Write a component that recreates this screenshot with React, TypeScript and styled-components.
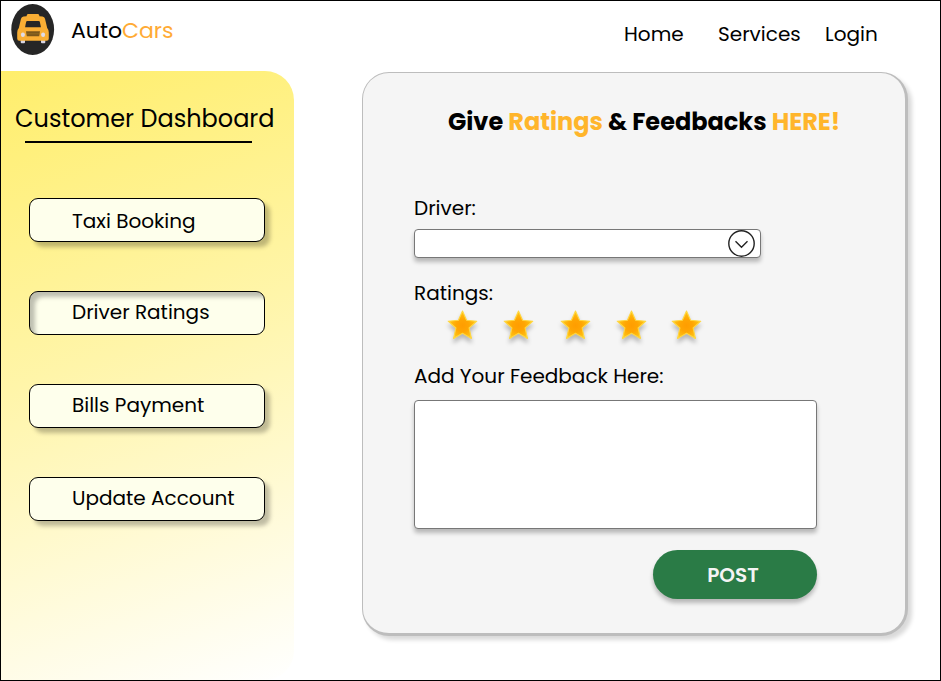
import React from 'react';
import styled, { createGlobalStyle } from 'styled-components';

const GlobalStyle = createGlobalStyle`
  * { box-sizing: border-box; }
  body {
    margin: 0;
    background: #fff;
    color: #000;
    font-family: Poppins, Inter, sans-serif;
    overflow: hidden;
  }
  h1, h2 { margin: 0; }
  button { font-family: inherit; color: inherit; }
`;

const Page = styled.div`
  width: 941px;
  height: 681px;
  border: 1px solid #000;
  display: flex;
  flex-direction: column;
  overflow: hidden;
`;

const Header = styled.header`
  height: 70px;
  flex: none;
  display: flex;
  align-items: flex-start;
  justify-content: space-between;
  padding: 0 63px 0 10px;
`;

const Brand = styled.div`
  display: flex;
  padding-top: 3px;
  gap: 16px;
`;

const BrandName = styled.span`
  font-size: 22px;
  line-height: 26px;
  margin-top: 14px;
`;

const Accent = styled.span<{ $tone?: string }>`
  color: ${(p) => p.$tone ?? '#ffb52b'};
`;

const Nav = styled.nav`
  display: grid;
  grid-template-columns: 94px 107px 52px;
  padding-top: 21px;
`;

const NavLink = styled.a`
  font-size: 20px;
  line-height: 24px;
  white-space: nowrap;
`;

const Body = styled.div`
  display: flex;
  align-items: flex-start;
  gap: 68px;
`;

const Sidebar = styled.aside`
  width: 293px;
  height: 609px;
  border-radius: 0 29px 29px 0;
  background: linear-gradient(160deg, #ffee6b 0%, #fff5a9 45%, #ffffff 100%);
  padding: 35px 0 0 28px;
`;

const SidebarTitle = styled.h1`
  width: 262px;
  margin-left: -14px;
  font-size: 24px;
  font-weight: 400;
  line-height: 26px;
  white-space: nowrap;
`;

const Underline = styled.div`
  width: 227px;
  height: 2px;
  margin: 9px 0 0 -4px;
  background: #000;
`;

const Menu = styled.div`
  display: flex;
  flex-direction: column;
  gap: 49px;
  margin-top: 55px;
`;

const MenuButton = styled.button<{ $active?: boolean; $lowered?: boolean }>`
  width: 236px;
  height: 44px;
  padding: ${(p) => (p.$lowered ? '2px 0 0 42px' : '0 0 2px 42px')};
  border: 1px solid #000;
  border-radius: 9px;
  background: #feffec;
  box-shadow: ${(p) => (p.$active ? 'inset 5px 5px 4px rgba(0, 0, 0, 0.25)' : '5px 5px 4px rgba(0, 0, 0, 0.25)')};
  font-size: 20px;
  line-height: 24px;
  text-align: left;
  white-space: nowrap;
`;

const Panel = styled.main`
  width: 546px;
  height: 564px;
  margin-top: 1px;
  padding: 36px 88px 0 51px;
  border: 1px solid #bdbdbd;
  border-right-width: 3px;
  border-bottom-width: 3px;
  border-radius: 27px;
  background: #f5f5f5;
  box-shadow: 4px 4px 4px rgba(0, 0, 0, 0.15);
  display: flex;
  flex-direction: column;
  align-items: flex-start;
`;

const PanelTitle = styled.h2`
  margin-left: 34px;
  font-size: 24px;
  font-weight: 700;
  line-height: 26px;
  white-space: nowrap;
`;

const Label = styled.label<{ $top: number }>`
  margin-top: ${(p) => p.$top}px;
  font-size: 20px;
  line-height: 24px;
  white-space: nowrap;
`;

const Select = styled.div`
  width: 347px;
  height: 29px;
  margin-top: 9px;
  padding-right: 5px;
  display: flex;
  align-items: center;
  justify-content: flex-end;
  background: #fff;
  border: 1px solid #777;
  border-radius: 4px;
  box-shadow: 0 4px 4px rgba(0, 0, 0, 0.25);
`;

const Stars = styled.div`
  display: grid;
  grid-template-columns: 56px 57px 56px 55px 29px;
  height: 29px;
  margin: 5px 0 0 34px;
`;

const StarIcon = styled.svg`
  width: 29px;
  height: 29px;
  overflow: visible;
  filter: drop-shadow(0 4px 2px rgba(0, 0, 0, 0.25));
`;

const Feedback = styled.textarea`
  display: block;
  width: 403px;
  height: 129px;
  margin-top: 12px;
  background: #fff;
  border: 1px solid #777;
  border-radius: 4px;
  box-shadow: 0 4px 4px rgba(0, 0, 0, 0.25);
  resize: none;
  outline: none;
`;

const PostButton = styled.button`
  align-self: flex-end;
  width: 164px;
  height: 49px;
  margin-top: 21px;
  padding: 1px 4px 0 0;
  border: 0;
  border-radius: 25px;
  background: #2a7b46;
  color: #f4f4f4;
  font-size: 20px;
  font-weight: 600;
  box-shadow: 0 4px 4px rgba(0, 0, 0, 0.25);
`;

const Logo = () => (
  <svg width="44" height="52" viewBox="0 0 44 52">
    <ellipse cx="21.7" cy="25.5" rx="21.4" ry="25.4" fill="#262626" />
    <path d="M9.700 34h4.300v4.300a1 1 0 0 1-1 1h-2.300a1 1 0 0 1-1-1zM30 34h4.300v4.300a1 1 0 0 1-1 1H31a1 1 0 0 1-1-1z" fill="#d9d5e3" />
    <path
      d="M12.500 12.600l3-.4.600-1.600q.3-.6 1-.6h9.800q.7 0 1 .6l.6 1.600 3 .4q2 .4 2.500 2.200l2.200 9.200q1.600 1.700 1.600 4.500v6q0 2.300-2 2.300H8.200q-2 0-2-2.300v-6q0-2.800 1.600-4.500l2.200-9.200q.5-1.800 2.500-2.200z"
      fill="#f9ae34"
    />
    <path d="M16.400 17h11.200q1.100 0 1.300 1l1 5.300H14.100l1-5.300q.2-1 1.300-1z" fill="#262626" />
    <path d="M15 27.300h14l-.8 5H15.800z" fill="#79561b" />
    <path d="M15.500 29.800h13" stroke="#9b6e22" strokeWidth=".7" />
    <ellipse cx="11.900" cy="30.700" rx="2" ry="2.200" fill="#e0dce9" />
    <ellipse cx="32.100" cy="30.700" rx="2" ry="2.200" fill="#e0dce9" />
  </svg>
);

const ChevronCircle = () => (
  <svg width="27" height="27" viewBox="0 0 27 27" fill="none" stroke="#222">
    <circle cx="13.500" cy="13.500" r="12.700" strokeWidth="1.400" />
    <path d="M7.500 11.300l6 6 6-6" strokeWidth="1.400" />
  </svg>
);

const Star = () => (
  <StarIcon viewBox="0 0 29 29">
    <defs>
      <radialGradient id="starFill" gradientUnits="userSpaceOnUse" cx="14.5" cy="15.5" r="14.5">
        <stop offset="0" stopColor="#ff9d00" />
        <stop offset=".42" stopColor="#ffa503" />
        <stop offset=".75" stopColor="#ffb90f" />
        <stop offset="1" stopColor="#ffd12b" />
      </radialGradient>
    </defs>
    <path
      d="M14.500 1l4.100 9.300 10.200.9-7.700 6.800 2.300 10.400-8.900-5.100-8.900 5.100 2.300-10.400L.2 11.200l10.200-.9z"
      fill="url(#starFill)"
      stroke="#ffd740"
      strokeWidth="1.100"
      strokeLinejoin="round"
    />
  </StarIcon>
);

export default function App() {
  return (
    <>
      <GlobalStyle />
      <Page>
        <Header>
          <Brand>
            <Logo />
            <BrandName>
              Auto<Accent $tone="#ffab35">Cars</Accent>
            </BrandName>
          </Brand>
          <Nav>
            <NavLink>Home</NavLink>
            <NavLink>Services</NavLink>
            <NavLink>Login</NavLink>
          </Nav>
        </Header>
        <Body>
          <Sidebar>
            <SidebarTitle>Customer Dashboard</SidebarTitle>
            <Underline />
            <Menu>
              <MenuButton $lowered>Taxi Booking</MenuButton>
              <MenuButton $active>Driver Ratings</MenuButton>
              <MenuButton>Bills Payment</MenuButton>
              <MenuButton>Update Account</MenuButton>
            </Menu>
          </Sidebar>
          <Panel>
            <PanelTitle>
              Give <Accent>Ratings</Accent> &amp; Feedbacks <Accent>HERE!</Accent>
            </PanelTitle>
            <Label $top={61}>Driver:</Label>
            <Select>
              <ChevronCircle />
            </Select>
            <Label $top={23}>Ratings:</Label>
            <Stars>
              {[1, 2, 3, 4, 5].map((n) => (
                <Star key={n} />
              ))}
            </Stars>
            <Label $top={25} htmlFor="feedback">Add Your Feedback Here:</Label>
            <Feedback id="feedback" />
            <PostButton>POST</PostButton>
          </Panel>
        </Body>
      </Page>
    </>
  );
}
